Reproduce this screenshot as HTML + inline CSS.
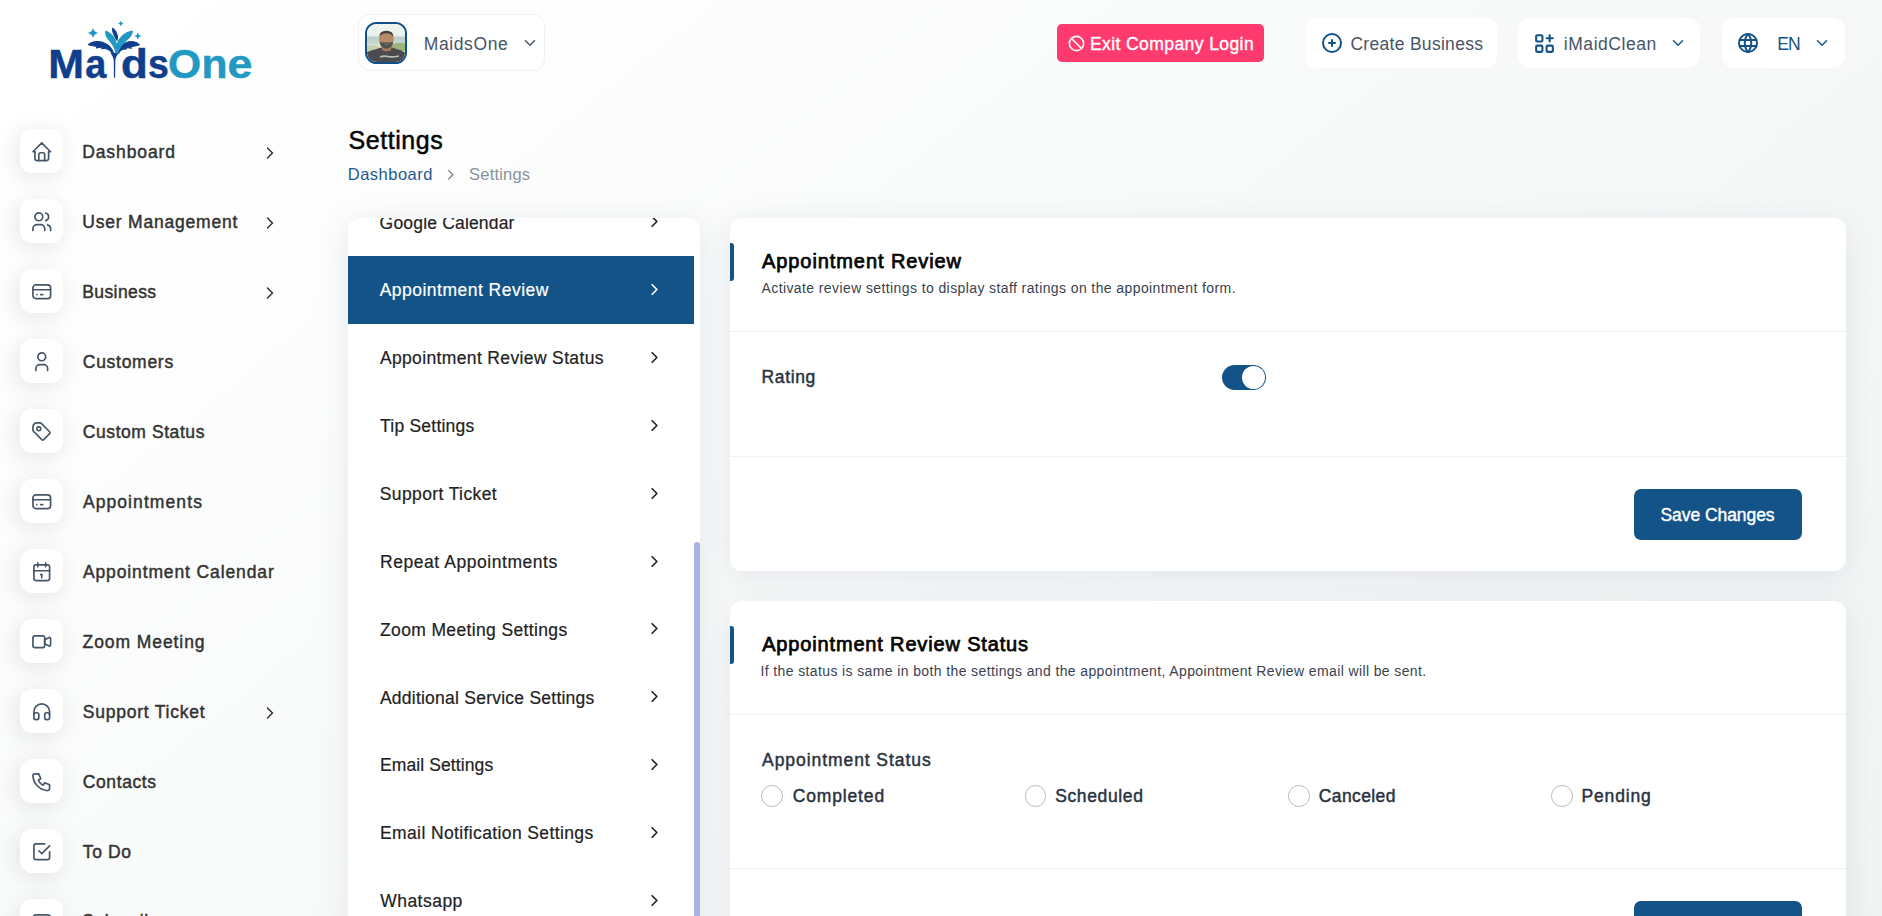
<!DOCTYPE html>
<html lang="en">
<head>
<meta charset="utf-8">
<title>Settings</title>
<style>
*{box-sizing:border-box;margin:0;padding:0}
html,body{width:1882px;height:916px;overflow:hidden}
body{position:relative;font-family:"Liberation Sans",sans-serif;color:#333;
 background:linear-gradient(141.55deg,rgba(240,244,243,0) 3.46%,#f0f4f3 99.86%),#fff;}
svg.ti{fill:none;stroke:currentColor;stroke-width:1.7;stroke-linecap:round;stroke-linejoin:round}
.abs{position:absolute}
/* sidebar */
.logo{position:absolute;left:40px;top:10px;width:220px;height:80px}
.nav{list-style:none}
.nav li{position:absolute;left:20px;height:43px;width:270px}
.nav .mi{position:absolute;left:-.1px;top:-.7px;width:43px;height:44px;border-radius:12px;background:#fff;
 box-shadow:-3px 4px 23px rgba(0,0,0,.1);color:#475569}
.nav .mi svg{position:absolute;left:10px;top:11.4px;width:23.5px;height:23.5px}
.nav .tx{position:absolute;left:62px;top:1.2px;line-height:43px;font-size:17.5px;font-weight:400;color:#333;-webkit-text-stroke:.45px #333;white-space:nowrap}
.nav .ar{position:absolute;left:239.8px;top:13.6px;width:20px;height:20px;color:#333;stroke-width:1.8}
/* header */
.hbox{position:absolute;background:#fff;border-radius:12px}
.htx{position:absolute;font-size:17.5px;color:#475569;white-space:nowrap;line-height:20px}
.hic{position:absolute;color:#145388}
/* title */
h1.pt{position:absolute;left:348px;top:124.4px;font-size:25px;font-weight:400;color:#060606;line-height:32px;-webkit-text-stroke:.5px #060606;white-space:nowrap}
  .bc{position:absolute;left:348px;top:163px;font-size:16.5px;line-height:22px;white-space:nowrap}
.bc a{color:#1d5a8c;text-decoration:none}
.bc .sep{display:inline-block;width:38px}
.bc span.cur{color:#8a9299}
/* settings nav */
.snav{position:absolute;left:348px;top:218px;width:352px;height:720px;background:#fff;border-radius:12px 12px 0 0;
 box-shadow:0 6px 30px rgba(182,186,203,.3);overflow:hidden}
.snav a{position:absolute;left:0;width:346px;height:67.85px;line-height:67.85px;padding-top:1.5px;padding-left:32px;font-size:17.5px;color:#222;text-decoration:none;white-space:nowrap;-webkit-text-stroke:.2px}
.snav a.act{background:#145388;color:#fff}
.snav a svg{position:absolute;left:297px;top:24.3px;width:19px;height:19px;stroke-width:2.1}
.snav .thumb{position:absolute;left:346px;top:324px;width:6px;height:400px;border-radius:3px;background:#a9b3e6}
/* cards */
.card{position:absolute;left:730px;width:1116px;background:#fff;border-radius:12px;box-shadow:0 6px 30px rgba(182,186,203,.3)}
.card .bar{position:absolute;left:0;width:4px;height:38px;background:#145388;border-radius:0 3px 3px 0}
.card h5{position:absolute;left:31.5px;font-size:20px;line-height:26px;font-weight:400;color:#060606;-webkit-text-stroke:.75px #060606;white-space:nowrap}
.card small{position:absolute;left:31.5px;font-size:14px;line-height:18px;color:#3a4250;white-space:nowrap}
.card .hr{position:absolute;left:0;right:0;height:1px;background:#f1f1f1}
.card .lbl{position:absolute;left:31.5px;font-size:17.5px;line-height:24px;font-weight:400;color:#293240;-webkit-text-stroke:.45px #293240;white-space:nowrap}
.btn{position:absolute;left:904px;width:168px;height:51px;border-radius:7px;background:#145388;color:#fff;font-size:17.5px;line-height:52.6px;text-align:center;font-weight:400;-webkit-text-stroke:.4px #fff;white-space:nowrap}
.sw{position:absolute;left:492px;top:146.8px;width:44px;height:25px;border-radius:13px;background:#145388}
.sw i{position:absolute;right:1px;top:1px;width:23px;height:23px;border-radius:50%;background:#fff}
.rad{position:absolute;top:184px;width:21.6px;height:21.6px;border-radius:50%;border:1px solid #b9bcc0;background:#fff}
.rl{position:absolute;top:183px;font-size:17.5px;line-height:24px;font-weight:400;color:#293240;-webkit-text-stroke:.45px #293240;white-space:nowrap}
/*FIT*/
#n1{letter-spacing:0.90px;margin-left:0.2px}
#n2{letter-spacing:0.80px;margin-left:0.2px}
#n3{letter-spacing:0.39px;margin-left:0.3px}
#n4{letter-spacing:0.72px;margin-left:0.8px}
#n5{letter-spacing:0.57px;margin-left:0.8px}
#n6{letter-spacing:1.09px;margin-left:0.9px}
#n7{letter-spacing:0.88px;margin-left:0.9px}
#n8{letter-spacing:0.92px;margin-left:0.6px}
#n9{letter-spacing:0.76px;margin-left:0.8px}
#n10{letter-spacing:0.60px;margin-left:0.8px}
#n11{letter-spacing:0.62px;margin-left:0.8px}
#s1{letter-spacing:0.48px;margin-left:-0.3px}
#s2{letter-spacing:0.36px;margin-left:-0.1px}
#s3{letter-spacing:0.23px;margin-left:0.0px}
#s4{letter-spacing:0.38px;margin-left:-0.2px}
#s5{letter-spacing:0.55px;margin-left:0.0px}
#s6{letter-spacing:0.36px;margin-left:0.0px}
#s7{letter-spacing:0.24px;margin-left:-0.1px}
#s8{letter-spacing:0.10px;margin-left:0.0px}
#s9{letter-spacing:0.38px;margin-left:0.0px}
#s10{letter-spacing:0.48px;margin-left:0.2px}
#h1{letter-spacing:0.61px;margin-left:-0.3px}
#h2{letter-spacing:0.42px;margin-left:-0.1px}
#h3{letter-spacing:0.30px;margin-left:0.4px}
#h4{letter-spacing:0.55px;margin-left:0.8px}
#h5{letter-spacing:-0.98px;margin-left:0.2px}
#p1{letter-spacing:0.58px;margin-left:0.4px}
#p2{letter-spacing:0.48px;margin-left:-0.2px}
#p3{letter-spacing:0.20px;margin-left:-1.8px}
#c1{letter-spacing:0.92px;margin-left:0.5px}
#c4{letter-spacing:0.84px;margin-left:0.7px}
#c2{letter-spacing:0.40px;margin-left:0.0px}
#c5{letter-spacing:0.38px;margin-left:-1.0px}
#c3{letter-spacing:0.63px;margin-left:0.1px}
#c6{letter-spacing:0.93px;margin-left:0.6px}
#r1{letter-spacing:0.85px;margin-left:0.7px}
#r2{letter-spacing:0.63px;margin-left:0.2px}
#r3{letter-spacing:0.41px;margin-left:0.2px}
#r4{letter-spacing:0.87px;margin-left:-0.6px}
.btn{letter-spacing:-0.06px;margin-left:-0.5px}
#s0{letter-spacing:0.18px;margin-left:-0.4px}
#n12{letter-spacing:0.50px;margin-left:0.3px}
/*ENDFIT*/
</style>
</head>
<body>

<!-- LOGO -->
<div class="logo">
<svg width="220" height="80" viewBox="0 0 220 80">
  <g font-family="Liberation Sans, sans-serif" font-weight="700" font-size="40" stroke-width=".5" paint-order="stroke">
    <text id="lg1" transform="translate(8.29 67.7) scale(1.071 1.013)" fill="#0f3f8c" stroke="#0f3f8c">M</text>
    <text id="lg2" transform="translate(45.31 67.7) scale(0.946 1.013)" fill="#0f3f8c" stroke="#0f3f8c">a</text>
    <text id="lg3" transform="translate(80.88 67.7) scale(1.098 1.013)" fill="#0f3f8c" stroke="#0f3f8c">d</text>
    <text id="lg4" transform="translate(108.08 67.7) scale(0.937 1.013)" fill="#0f3f8c" stroke="#0f3f8c">s</text>
    <text id="lg5" transform="translate(127.97 67.7) scale(1.064 1.013)" fill="#2299c3" stroke="#2299c3">O</text>
    <text id="lg6" transform="translate(161.44 67.7) scale(1.065 1.013)" fill="#2299c3" stroke="#2299c3">n</text>
    <text id="lg7" transform="translate(187.50 67.7) scale(1.120 1.013)" fill="#2299c3" stroke="#2299c3">e</text>
  </g>
  <g transform="translate(-0.6 0.4)" fill="#0f3f8c" stroke="#0f3f8c" stroke-width="1.1" stroke-linejoin="round">
    <path d="M74.01 42.59C72.1 36.1 65.22 30.75 57.58 31.13C53.76 31.36 50.7 32.66 49.02 34.34C52.23 35.33 55.28 35.71 57.96 35.94L56.96 37.62C59.1 37.01 61.4 36.71 62.93 37.01L62.31 38.24C65.98 37.62 70.57 39.15 72.86 42.82Z"/>
    <path d="M77.83 42.59C78.59 36.86 85.09 30.75 92.73 31.13C95.78 31.36 98.46 32.66 100.14 34.41C96.93 35.48 93.87 36.1 91.05 36.25L92.12 37.85C90.05 37.24 87.99 37.01 86.46 37.39L87 38.54C83.56 38.16 80.5 39.92 79.13 42.82Z"/>
    <path d="M77.14 29.6C75.92 26.93 74.54 24.63 73.62 21.96C73.17 20.43 73.01 18.9 73.32 17.76C75.3 19.28 77.06 21.96 77.83 24.63C78.21 26.54 78.06 28.3 77.6 29.83Z"/>
    <path stroke="none" d="M71.18 42.59L79.13 42.59C77.44 45.27 76.07 47.56 75.92 50.23L75.76 67.43L74.54 67.43L74.39 50.23C74.24 47.56 72.86 45.27 71.18 42.59Z"/>
  </g>
  <g transform="translate(-0.6 0.4)" fill="#2299c3" stroke="#2299c3" stroke-width="1.3" stroke-linejoin="round">
    <path d="M76.53 42.21C75.92 37.62 72.86 33.04 69.42 29.22C67.13 26.54 65.98 23.87 66.36 20.96C69.42 21.96 72.48 24.25 74.54 27.69C76.53 31.13 77.6 36.1 77.44 42.21Z"/>
    <path d="M76.83 42.21C76.53 36.1 78.21 29.98 82.79 25.78C85.85 22.95 89.29 21.19 92.88 20.66C92.73 23.49 91.2 26.16 88.53 28.45C85.09 31.13 80.5 34.57 78.21 42.21Z"/>
    <path stroke="none" d="M53.6 17.29Q54.43 21.66 58.8 22.49Q54.43 23.32 53.6 27.69Q52.77 23.32 48.4 22.49Q52.77 21.66 53.6 17.29Z"/>
    <path stroke="none" d="M81.42 10.27Q81.86 12.58 84.17 13.02Q81.86 13.46 81.42 15.77Q80.98 13.46 78.67 13.02Q80.98 12.58 81.42 10.27Z"/>
    <path stroke="none" d="M98.46 22.03Q99.02 24.99 101.98 25.55Q99.02 26.11 98.46 29.07Q97.9 26.11 94.94 25.55Q97.9 24.99 98.46 22.03Z"/>
  </g>
</svg>
</div>

<!-- SIDEBAR NAV -->
<ul class="nav">
  <li style="top:129.5px"><span class="mi"><svg class="ti" viewBox="0 0 24 24"><polyline points="5 12 3 12 12 3 21 12 19 12"/><path d="M5 12v7a2 2 0 0 0 2 2h10a2 2 0 0 0 2 -2v-7"/><path d="M9 21v-6a2 2 0 0 1 2 -2h2a2 2 0 0 1 2 2v6"/></svg></span><span id="n1" class="tx">Dashboard</span><svg class="ti ar" viewBox="0 0 24 24"><polyline points="9 6 15 12 9 18"/></svg></li>
  <li style="top:199.5px"><span class="mi"><svg class="ti" viewBox="0 0 24 24"><circle cx="9" cy="7" r="4"/><path d="M3 21v-2a4 4 0 0 1 4 -4h4a4 4 0 0 1 4 4v2"/><path d="M16 3.13a4 4 0 0 1 0 7.75"/><path d="M21 21v-2a4 4 0 0 0 -3 -3.85"/></svg></span><span id="n2" class="tx">User Management</span><svg class="ti ar" viewBox="0 0 24 24"><polyline points="9 6 15 12 9 18"/></svg></li>
  <li style="top:269.5px"><span class="mi"><svg class="ti" viewBox="0 0 24 24"><rect x="3" y="5" width="18" height="14" rx="3"/><line x1="3" y1="10" x2="21" y2="10"/><line x1="7" y1="15" x2="7.01" y2="15"/><line x1="11" y1="15" x2="13" y2="15"/></svg></span><span id="n3" class="tx">Business</span><svg class="ti ar" viewBox="0 0 24 24"><polyline points="9 6 15 12 9 18"/></svg></li>
  <li style="top:339.5px"><span class="mi"><svg class="ti" viewBox="0 0 24 24"><circle cx="12" cy="7" r="4"/><path d="M6 21v-2a4 4 0 0 1 4 -4h4a4 4 0 0 1 4 4v2"/></svg></span><span id="n4" class="tx">Customers</span></li>
  <li style="top:409.5px"><span class="mi"><svg class="ti" viewBox="0 0 24 24"><path d="M11 3l9 9a1.5 1.5 0 0 1 0 2l-6 6a1.5 1.5 0 0 1 -2 0l-9 -9v-4a4 4 0 0 1 4 -4h4"/><circle cx="9" cy="9" r="2"/></svg></span><span id="n5" class="tx">Custom Status</span></li>
  <li style="top:479.5px"><span class="mi"><svg class="ti" viewBox="0 0 24 24"><rect x="3" y="5" width="18" height="14" rx="3"/><line x1="3" y1="10" x2="21" y2="10"/><line x1="7" y1="15" x2="7.01" y2="15"/><line x1="11" y1="15" x2="13" y2="15"/></svg></span><span id="n6" class="tx">Appointments</span></li>
  <li style="top:549.5px"><span class="mi"><svg class="ti" viewBox="0 0 24 24"><rect x="4" y="5" width="16" height="16" rx="2"/><line x1="16" y1="3" x2="16" y2="7"/><line x1="8" y1="3" x2="8" y2="7"/><line x1="4" y1="11" x2="20" y2="11"/><line x1="11" y1="15" x2="12" y2="15"/><line x1="12" y1="15" x2="12" y2="18"/></svg></span><span id="n7" class="tx">Appointment Calendar</span></li>
  <li style="top:619.5px"><span class="mi"><svg class="ti" viewBox="0 0 24 24"><path d="M15 10l4.553 -2.276a1 1 0 0 1 1.447 .894v6.764a1 1 0 0 1 -1.447 .894l-4.553 -2.276v-4z"/><rect x="3" y="6" width="12" height="12" rx="2"/></svg></span><span id="n8" class="tx">Zoom Meeting</span></li>
  <li style="top:689.5px"><span class="mi"><svg class="ti" viewBox="0 0 24 24"><rect x="4" y="13" rx="2" width="5" height="7"/><rect x="15" y="13" rx="2" width="5" height="7"/><path d="M4 15v-3a8 8 0 0 1 16 0v3"/></svg></span><span id="n9" class="tx">Support Ticket</span><svg class="ti ar" viewBox="0 0 24 24"><polyline points="9 6 15 12 9 18"/></svg></li>
  <li style="top:759.5px"><span class="mi"><svg class="ti" viewBox="0 0 24 24"><path d="M5 4h4l2 5l-2.5 1.5a11 11 0 0 0 5 5l1.5 -2.5l5 2v4a2 2 0 0 1 -2 2a16 16 0 0 1 -15 -15a2 2 0 0 1 2 -2"/></svg></span><span id="n10" class="tx">Contacts</span></li>
  <li style="top:829.5px"><span class="mi"><svg class="ti" viewBox="0 0 24 24"><polyline points="9 11 12 14 20 6"/><path d="M20 12v6a2 2 0 0 1 -2 2h-12a2 2 0 0 1 -2 -2v-12a2 2 0 0 1 2 -2h9"/></svg></span><span id="n11" class="tx">To Do</span></li>
  <li style="top:899.5px"><span class="mi"><svg class="ti" viewBox="0 0 24 24"><rect x="3" y="5" width="18" height="14" rx="3"/><line x1="3" y1="10" x2="21" y2="10"/></svg></span><span id="n12" class="tx" style="top:.2px">Subscribers</span></li>
</ul>

<!-- HEADER -->
<div class="hbox" style="left:358px;top:14px;width:187px;height:57px;border:1px solid #eff1f2"></div>
<div class="abs" id="avatar" style="left:365px;top:21.8px;width:42px;height:42px;border-radius:11.5px;border:2px solid #0f4f8a;background:#e9efeb;overflow:hidden"><svg width="38" height="38" viewBox="0 0 38 38" style="display:block">
  <defs><linearGradient id="sky" x1="0" y1="0" x2="0" y2="1"><stop offset="0" stop-color="#f1f5f0"/><stop offset=".3" stop-color="#eaf0ec"/><stop offset=".36" stop-color="#bccbc8"/><stop offset=".5" stop-color="#c6d8d0"/><stop offset=".56" stop-color="#dfe3d2"/><stop offset="1" stop-color="#d5d3bf"/></linearGradient>
  <filter id="bl" x="-10%" y="-10%" width="120%" height="120%"><feGaussianBlur stdDeviation=".7"/></filter></defs>
  <rect width="38" height="38" fill="url(#sky)"/>
  <g filter="url(#bl)">
    <path d="M24 20.5Q30 18 38 19V27H24Z" fill="#9db47d"/>
    <path d="M0 22Q6 20.5 12 22.5V28H0Z" fill="#c9cfae"/>
    <path d="M-1 39V29Q1 27 8 25.5L14 23.5H25L31 25.5Q37 27 39 30V39Z" fill="#4c4c4f"/>
    <path d="M15 20H24V26Q19.500 28.500 15 26Z" fill="#a87b5e"/>
    <ellipse cx="19.4" cy="15.3" rx="7.3" ry="8.6" fill="#b98a69"/>
    <path d="M12.300 13Q12.500 6.800 19.400 6.800Q26.300 6.800 26.500 13Q24 9.300 19.400 9.300Q14.800 9.300 12.300 13Z" fill="#4b4139"/>
    <path d="M12.800 17.500Q15 19 19.400 18.200Q23.800 19 26 17.500Q26 22 22.500 24Q19.400 25.300 16.300 24Q12.800 22 12.800 17.500Z" fill="#55534e"/>
    <path d="M16.800 19.600Q19.400 20.800 22 19.600Q19.400 21.600 16.800 19.600Z" fill="#d9c9bd"/>
    <path d="M13 33Q17 31.500 21 32.500T32 32" stroke="#b9bcb9" stroke-width="1.6" fill="none"/>
  </g>
</svg></div>
<span id="h1" class="htx" style="left:424px;top:34px">MaidsOne</span>
<svg class="ti hic" style="left:520.6px;top:34.2px;width:18px;height:18px;color:#475569;stroke-width:1.9" viewBox="0 0 24 24"><polyline points="6 9 12 15 18 9"/></svg>

<div class="abs" style="left:1057px;top:24px;width:207px;height:38px;border-radius:5px;background:#ff3a6e"></div>
<svg class="ti abs" style="left:1067px;top:33.5px;width:19px;height:19px;color:#fff;stroke-width:2" viewBox="0 0 24 24"><circle cx="12" cy="12" r="9"/><line x1="5.7" y1="5.7" x2="18.3" y2="18.3"/></svg>
<span id="h2" class="htx" style="left:1090px;top:33.6px;color:#fff;-webkit-text-stroke:.4px #fff">Exit Company Login</span>

<div class="hbox" style="left:1305px;top:18px;width:192px;height:50px"></div>
<svg class="ti hic" style="left:1319.6px;top:30.7px;width:24px;height:24px;stroke-width:2" viewBox="0 0 24 24"><circle cx="12" cy="12" r="9"/><line x1="9" y1="12" x2="15" y2="12"/><line x1="12" y1="9" x2="12" y2="15"/></svg>
<span id="h3" class="htx" style="left:1350px;top:33.6px">Create Business</span>

<div class="hbox" style="left:1518px;top:18px;width:182px;height:50px"></div>
<svg class="ti hic" style="left:1532.1px;top:30.6px;width:25px;height:25px;stroke-width:2" viewBox="0 0 24 24"><rect x="4" y="4" width="6" height="6" rx="1"/><rect x="4" y="14" width="6" height="6" rx="1"/><rect x="14" y="14" width="6" height="6" rx="1"/><line x1="14" y1="7" x2="20" y2="7"/><line x1="17" y1="4" x2="17" y2="10"/></svg>
<span id="h4" class="htx" style="left:1563px;top:33.6px">iMaidClean</span>
<svg class="ti hic" style="left:1668.6px;top:34px;width:18px;height:18px;stroke-width:1.9" viewBox="0 0 24 24"><polyline points="6 9 12 15 18 9"/></svg>

<div class="hbox" style="left:1722px;top:18px;width:123px;height:50px"></div>
<svg class="ti hic" style="left:1736.3px;top:30.8px;width:24px;height:24px;stroke-width:2" viewBox="0 0 24 24"><circle cx="12" cy="12" r="9"/><line x1="3.6" y1="9" x2="20.4" y2="9"/><line x1="3.6" y1="15" x2="20.4" y2="15"/><path d="M11.5 3a17 17 0 0 0 0 18"/><path d="M12.5 3a17 17 0 0 1 0 18"/></svg>
<span id="h5" class="htx" style="left:1777px;top:33.6px;color:#145388">EN</span>
<svg class="ti hic" style="left:1813px;top:34px;width:18px;height:18px;stroke-width:1.9" viewBox="0 0 24 24"><polyline points="6 9 12 15 18 9"/></svg>

<!-- PAGE TITLE -->
<h1 id="p1" class="pt">Settings</h1>
<div class="bc"><a id="p2">Dashboard</a><span class="sep"></span><span id="p3" class="cur">Settings</span></div>
<svg class="ti abs" style="left:442.2px;top:165.6px;width:17.5px;height:17.5px;color:#7c858e;stroke-width:1.9" viewBox="0 0 24 24"><polyline points="9 6 15 12 9 18"/></svg>

<!-- SETTINGS NAV -->
<div class="snav">
  <a id="s0" style="top:-29.95px">Google Calendar<svg class="ti" viewBox="0 0 24 24"><polyline points="9 6 15 12 9 18"/></svg></a>
  <a id="s1" class="act" style="top:37.90px">Appointment Review<svg class="ti" viewBox="0 0 24 24"><polyline points="9 6 15 12 9 18"/></svg></a>
  <a id="s2" style="top:105.75px">Appointment Review Status<svg class="ti" viewBox="0 0 24 24"><polyline points="9 6 15 12 9 18"/></svg></a>
  <a id="s3" style="top:173.60px">Tip Settings<svg class="ti" viewBox="0 0 24 24"><polyline points="9 6 15 12 9 18"/></svg></a>
  <a id="s4" style="top:241.45px">Support Ticket<svg class="ti" viewBox="0 0 24 24"><polyline points="9 6 15 12 9 18"/></svg></a>
  <a id="s5" style="top:309.30px">Repeat Appointments<svg class="ti" viewBox="0 0 24 24"><polyline points="9 6 15 12 9 18"/></svg></a>
  <a id="s6" style="top:377.15px">Zoom Meeting Settings<svg class="ti" viewBox="0 0 24 24"><polyline points="9 6 15 12 9 18"/></svg></a>
  <a id="s7" style="top:445.00px">Additional Service Settings<svg class="ti" viewBox="0 0 24 24"><polyline points="9 6 15 12 9 18"/></svg></a>
  <a id="s8" style="top:512.85px">Email Settings<svg class="ti" viewBox="0 0 24 24"><polyline points="9 6 15 12 9 18"/></svg></a>
  <a id="s9" style="top:580.70px">Email Notification Settings<svg class="ti" viewBox="0 0 24 24"><polyline points="9 6 15 12 9 18"/></svg></a>
  <a id="s10" style="top:648.55px">Whatsapp<svg class="ti" viewBox="0 0 24 24"><polyline points="9 6 15 12 9 18"/></svg></a>
  <div class="thumb"></div>
</div>

<!-- CARD 1 -->
<div class="card" style="top:218px;height:353px">
  <div class="bar" style="top:25px"></div>
  <h5 id="c1" style="top:29.6px">Appointment Review</h5>
  <small id="c2" style="top:61px">Activate review settings to display staff ratings on the appointment form.</small>
  <div class="hr" style="top:113px"></div>
  <div id="c3" class="lbl" style="top:147px">Rating</div>
  <div class="sw"><i></i></div>
  <div class="hr" style="top:238px"></div>
  <div class="btn" style="top:271px">Save Changes</div>
</div>

<!-- CARD 2 -->
<div class="card" style="top:601px;height:400px">
  <div class="bar" style="top:25px"></div>
  <h5 id="c4" style="top:29.6px">Appointment Review Status</h5>
  <small id="c5" style="top:61px">If the status is same in both the settings and the appointment, Appointment Review email will be sent.</small>
  <div class="hr" style="top:113px"></div>
  <div id="c6" class="lbl" style="top:147px">Appointment Status</div>
  <span class="rad" style="left:31.3px"></span><span id="r1" class="rl" style="left:62px">Completed</span>
  <span class="rad" style="left:294.6px"></span><span id="r2" class="rl" style="left:325px">Scheduled</span>
  <span class="rad" style="left:558px"></span><span id="r3" class="rl" style="left:588.5px">Canceled</span>
  <span class="rad" style="left:821px"></span><span id="r4" class="rl" style="left:852px">Pending</span>
  <div class="hr" style="top:267px"></div>
  <div class="btn" style="top:300px">Save Changes</div>
</div>

</body>
</html>
